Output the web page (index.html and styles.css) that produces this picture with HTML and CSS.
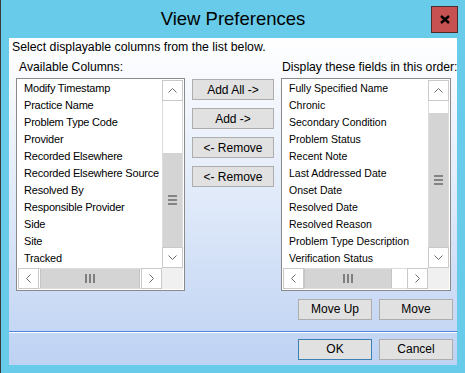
FILE: index.html
```html
<!DOCTYPE html>
<html>
<head>
<meta charset="utf-8">
<title>View Preferences</title>
<link rel="stylesheet" href="styles.css">
</head>
<body>
<div class="window">
  <div class="titlebar">
    <div></div>
    <div class="title">View Preferences</div>
    <button class="close" aria-label="Close">
      <svg width="10" height="9" viewBox="0 0 10 9"><path d="M1 1 L9 8 M9 1 L1 8" stroke="#000" stroke-width="2.4" fill="none"/></svg>
    </button>
  </div>
  <div class="client">
    <div class="instr">Select displayable columns from the list below.</div>
    <div class="main">
      <div class="label label-left">Available Columns:</div>
      <div></div>
      <div class="label label-right">Display these fields in this order:</div>

      <div class="listbox listbox-left">
        <ul class="items">
          <li>Modify Timestamp</li>
          <li>Practice Name</li>
          <li>Problem Type Code</li>
          <li>Provider</li>
          <li>Recorded Elsewhere</li>
          <li>Recorded Elsewhere Source</li>
          <li>Resolved By</li>
          <li>Responsible Provider</li>
          <li>Side</li>
          <li>Site</li>
          <li>Tracked</li>
        </ul>
        <div class="vbar">
          <div class="sbtn sbtn-up"><svg width="9" height="5" viewBox="0 0 9 5"><polyline points="0.5,4.5 4.5,0.5 8.5,4.5" fill="none" stroke="#6d6d6d" stroke-width="1"/></svg></div>
          <div class="vtrack vtrack-left"><div class="vthumb"><svg width="9" height="10" viewBox="0 0 9 10"><path d="M0 1 H9 M0 5 H9 M0 9 H9" stroke="#6a6a6a" stroke-width="1.6"/></svg></div></div>
          <div class="sbtn sbtn-down"><svg width="9" height="5" viewBox="0 0 9 5"><polyline points="0.5,0.5 4.5,4.5 8.5,0.5" fill="none" stroke="#6d6d6d" stroke-width="1"/></svg></div>
        </div>
        <div class="hbar">
          <div class="sbtn sbtn-left"><svg width="5" height="9" viewBox="0 0 5 9"><polyline points="4.5,0.5 0.5,4.5 4.5,8.5" fill="none" stroke="#6d6d6d" stroke-width="1"/></svg></div>
          <div class="htrack"><div class="hthumb hthumb-left"><svg width="10" height="9" viewBox="0 0 10 9"><path d="M1 0 V9 M5 0 V9 M9 0 V9" stroke="#6a6a6a" stroke-width="1.6"/></svg></div></div>
          <div class="sbtn sbtn-right"><svg width="5" height="9" viewBox="0 0 5 9"><polyline points="0.5,0.5 4.5,4.5 0.5,8.5" fill="none" stroke="#6d6d6d" stroke-width="1"/></svg></div>
        </div>
        <div class="corner"></div>
      </div>

      <div class="midbtns">
        <button class="btn btn-mid">Add All -&gt;</button>
        <button class="btn btn-mid">Add -&gt;</button>
        <button class="btn btn-mid">&lt;- Remove</button>
        <button class="btn btn-mid">&lt;- Remove</button>
      </div>

      <div class="listbox listbox-right">
        <ul class="items items-right">
          <li>Fully Specified Name</li>
          <li>Chronic</li>
          <li>Secondary Condition</li>
          <li>Problem Status</li>
          <li>Recent Note</li>
          <li>Last Addressed Date</li>
          <li>Onset Date</li>
          <li>Resolved Date</li>
          <li>Resolved Reason</li>
          <li>Problem Type Description</li>
          <li>Verification Status</li>
        </ul>
        <div class="vbar">
          <div class="sbtn sbtn-up"><svg width="9" height="5" viewBox="0 0 9 5"><polyline points="0.5,4.5 4.5,0.5 8.5,4.5" fill="none" stroke="#6d6d6d" stroke-width="1"/></svg></div>
          <div class="vtrack vtrack-right"><div class="vthumb"><svg width="9" height="10" viewBox="0 0 9 10"><path d="M0 1 H9 M0 5 H9 M0 9 H9" stroke="#6a6a6a" stroke-width="1.6"/></svg></div></div>
          <div class="sbtn sbtn-down"><svg width="9" height="5" viewBox="0 0 9 5"><polyline points="0.5,0.5 4.5,4.5 8.5,0.5" fill="none" stroke="#6d6d6d" stroke-width="1"/></svg></div>
        </div>
        <div class="hbar">
          <div class="sbtn sbtn-left"><svg width="5" height="9" viewBox="0 0 5 9"><polyline points="4.5,0.5 0.5,4.5 4.5,8.5" fill="none" stroke="#6d6d6d" stroke-width="1"/></svg></div>
          <div class="htrack"><div class="hthumb hthumb-right"><svg width="10" height="9" viewBox="0 0 10 9"><path d="M1 0 V9 M5 0 V9 M9 0 V9" stroke="#6a6a6a" stroke-width="1.6"/></svg></div></div>
          <div class="sbtn sbtn-right"><svg width="5" height="9" viewBox="0 0 5 9"><polyline points="0.5,0.5 4.5,4.5 0.5,8.5" fill="none" stroke="#6d6d6d" stroke-width="1"/></svg></div>
        </div>
        <div class="corner"></div>
      </div>
    </div>

    <div class="btnrow btnrow-move">
      <button class="btn">Move Up</button>
      <button class="btn">Move</button>
    </div>
    <div class="separator"></div>
    <div class="btnrow btnrow-ok">
      <button class="btn btn-default">OK</button>
      <button class="btn">Cancel</button>
    </div>
  </div>
</div>
</body>
</html>
```

FILE: styles.css
```css
html, body {
  margin: 0;
  padding: 0;
}

body {
  width: 465px;
  height: 373px;
  overflow: hidden;
  font-family: "Liberation Sans", Arial, sans-serif;
  color: #000;
}

.window {
  width: 465px;
  height: 373px;
  box-sizing: border-box;
  border-left: 1px solid #3b3b3b;
  background: #67cbe9;
  display: flex;
  flex-direction: column;
}

.titlebar {
  height: 38px;
  flex: none;
  display: grid;
  grid-template-columns: 1fr auto 1fr;
  align-items: start;
}

.title {
  font-size: 18.5px;
  line-height: 38px;
  color: #000;
  white-space: nowrap;
}

.close {
  justify-self: end;
  margin: 6px 7px 0 0;
  width: 27px;
  height: 27px;
  box-sizing: border-box;
  padding: 0;
  background: #c75050;
  border: 1px solid #4d2b2b;
  display: flex;
  align-items: center;
  justify-content: center;
}

.client {
  margin: 0 8px;
  height: 327px;
  flex: none;
  background: linear-gradient(to bottom, #ffffff 0%, #e6eefa 40%, #bed2f3 100%);
  display: flex;
  flex-direction: column;
}

.instr {
  margin: 2px 0 0 3px;
  font-size: 12.3px;
  line-height: 14px;
  white-space: nowrap;
}

.main {
  margin: 6px 0 0 7px;
  display: grid;
  grid-template-columns: 169px 82px 170px;
  grid-template-rows: 18px 213px;
  column-gap: 7px;
}

.label {
  font-size: 12.2px;
  line-height: 14px;
  white-space: nowrap;
}

.label-left {
  padding-left: 3px;
}

.label-right {
  padding-left: 1px;
}

.listbox {
  box-sizing: border-box;
  border: 1px solid #8a8a8a;
  background: #fff;
  padding: 1px;
  display: grid;
  grid-template-rows: 1fr 21px;
}

.listbox-left {
  grid-template-columns: 144px 21px;
}

.listbox-right {
  grid-template-columns: 145px 21px;
}

.items {
  list-style: none;
  margin: 0;
  padding: 0 0 0 6px;
  overflow: hidden;
  font-size: 11px;
  letter-spacing: -0.2px;
  white-space: nowrap;
}

.items li {
  height: 17px;
  line-height: 17px;
}

.items-right {
  padding-left: 6px;
  font-size: 10.5px;
  letter-spacing: 0;
}

.vbar {
  display: flex;
  flex-direction: column;
}

.sbtn {
  box-sizing: border-box;
  width: 21px;
  height: 21px;
  flex: none;
  border: 1px solid #c9c9c9;
  background: #fff;
  display: flex;
  align-items: center;
  justify-content: center;
}

.vtrack {
  flex: 1;
  display: flex;
  flex-direction: column;
  border-left: 1px solid #dcdcdc;
  border-right: 1px solid #dcdcdc;
  background: #fff;
}

.vtrack-left {
  padding-top: 52px;
}

.vtrack-right {
  padding-top: 12px;
}

.vthumb {
  flex: 1;
  background: #d4d4d4;
  display: flex;
  align-items: center;
  justify-content: center;
}

.hbar {
  display: flex;
}

.htrack {
  flex: 1;
  display: flex;
  border-top: 1px solid #dcdcdc;
  border-bottom: 1px solid #dcdcdc;
  background: #fff;
}

.hthumb {
  background: #d4d4d4;
  border-left: 1px solid #c4c4c4;
  border-right: 1px solid #c4c4c4;
  display: flex;
  align-items: center;
  justify-content: center;
}

.hthumb-left {
  width: 100px;
  margin-left: 1px;
  box-sizing: border-box;
}

.hthumb-right {
  width: 88px;
  box-sizing: border-box;
}

.corner {
  background: #f0f0f0;
}

.midbtns {
  padding-top: 1px;
  display: flex;
  flex-direction: column;
  gap: 8px;
}

.btn {
  box-sizing: border-box;
  height: 21px;
  width: 74px;
  padding: 0;
  margin: 0;
  background: #e1e1e1;
  border: 1px solid #adadad;
  font-family: "Liberation Sans", Arial, sans-serif;
  font-size: 12px;
  line-height: 19px;
  color: #000;
  white-space: nowrap;
}

.btn-mid {
  width: 82px;
  padding-top: 2px;
  line-height: 17px;
}

.btn-default {
  border-color: #3c7fb1;
}

.btnrow {
  display: flex;
  justify-content: flex-end;
  gap: 7px;
  padding-right: 4px;
}

.btnrow-move {
  margin-top: 8px;
}

.separator {
  margin-top: 11px;
  height: 1px;
  background: #4d86dc;
  border-bottom: 1px solid #ffffff;
}

.btnrow-ok {
  margin-top: 6px;
}
```
